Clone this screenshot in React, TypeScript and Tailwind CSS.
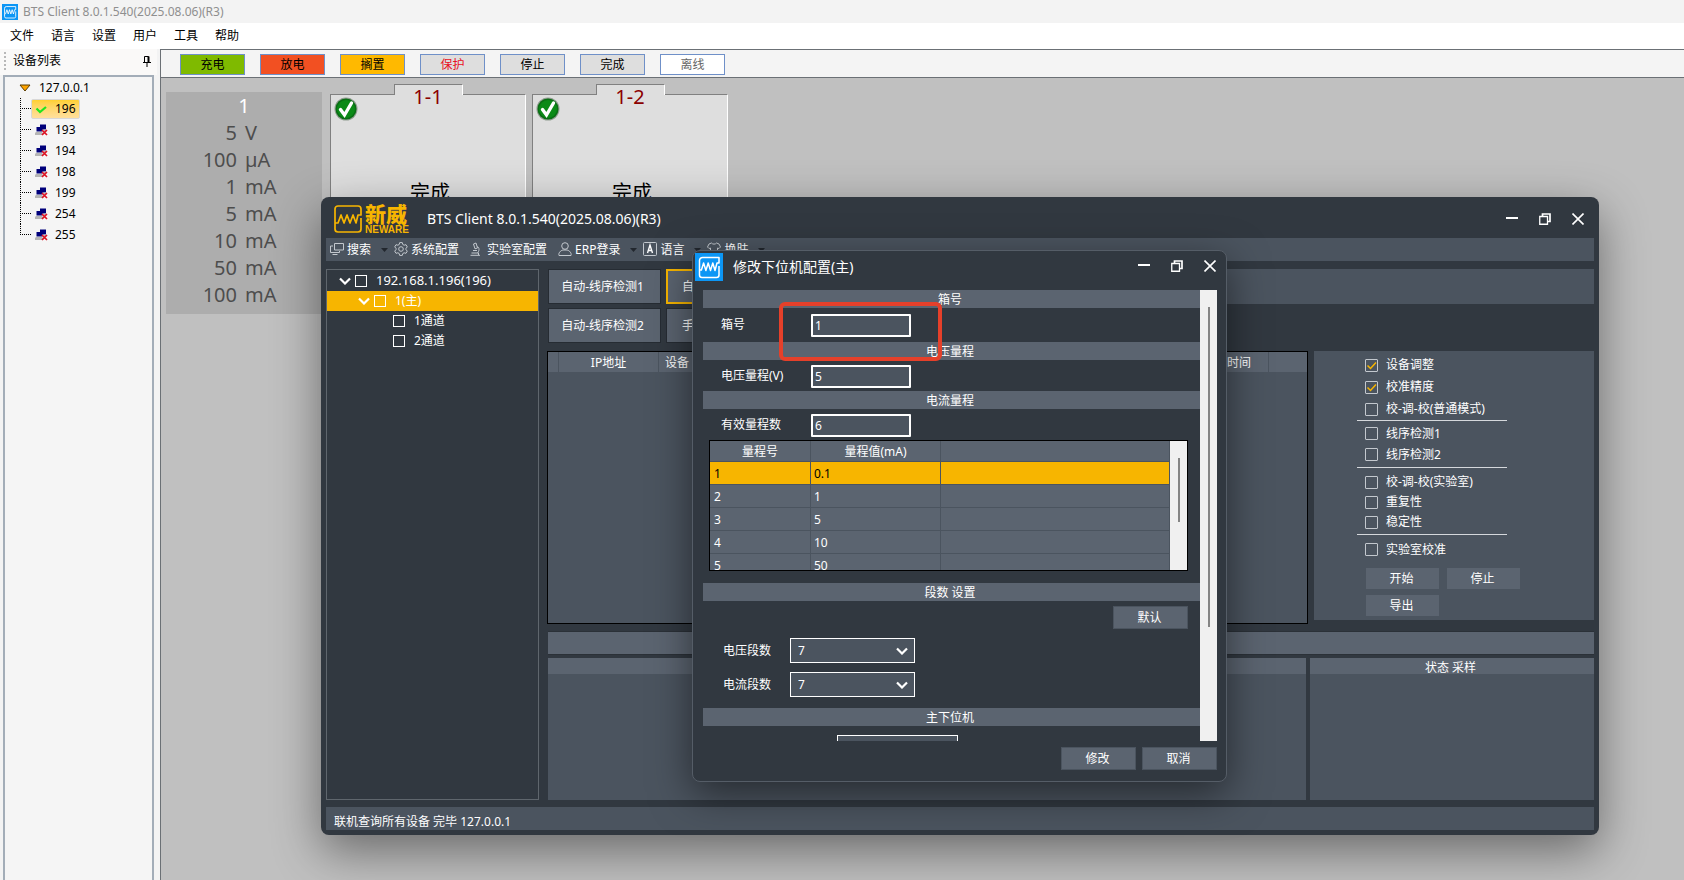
import { useState } from 'react';
import type { ReactNode } from 'react';
import clsx from 'clsx';

const APP_TITLE = 'BTS Client 8.0.1.540(2025.08.06)(R3)';

const menus = ['文件', '语言', '设置', '用户', '工具', '帮助'];

const devices = ['196', '193', '194', '198', '199', '254', '255'];

const legend = [
  { label: '充电', className: 'bg-[#7fba00] text-black' },
  { label: '放电', className: 'bg-[#f25022] text-black' },
  { label: '搁置', className: 'bg-[#ffb900] text-black' },
  { label: '保护', className: 'bg-[#dedede] text-[#e81123]' },
  { label: '停止', className: 'bg-[#dedede] text-black' },
  { label: '完成', className: 'bg-[#dedede] text-black' },
  { label: '离线', className: 'bg-white text-[#666666]' },
];

const ranges = [
  ['5', 'V'],
  ['100', 'µA'],
  ['1', 'mA'],
  ['5', 'mA'],
  ['10', 'mA'],
  ['50', 'mA'],
  ['100', 'mA'],
];

const currentRanges = ['0.1', '1', '5', '10', '50'];

const checkGroups = [
  {
    rowClass: 'h-[22px]',
    groupClass: 'mb-0.5 border-b',
    items: [
      { label: '设备调整', checked: true },
      { label: '校准精度', checked: true },
      { label: '校-调-校(普通模式)', checked: false },
    ],
  },
  {
    rowClass: 'h-[21px]',
    groupClass: 'mb-1 border-b pb-0.5',
    items: [
      { label: '线序检测1', checked: false },
      { label: '线序检测2', checked: false },
    ],
  },
  {
    rowClass: 'h-5',
    groupClass: 'mb-1 border-b pb-0.5',
    items: [
      { label: '校-调-校(实验室)', checked: false },
      { label: '重复性', checked: false },
      { label: '稳定性', checked: false },
    ],
  },
  {
    rowClass: 'h-[21px]',
    groupClass: '',
    items: [{ label: '实验室校准', checked: false }],
  },
];

function AppIcon({ className }: { className?: string }) {
  return (
    <svg viewBox="0 0 28 28" className={className} fill="none" aria-hidden="true">
      <rect width="28" height="28" fill="#0c96f5" />
      <path
        d="M4.500 17V7.500a3 3 0 0 1 3-3H24V10h-2l-2 7.500-2.200-7.500-2.300 7.500-2.300-7.500-2.300 7.500-2.300-7.500-2.200 7H4.500V22A2.500 2.500 0 0 0 7 24.500h14.500A2.500 2.500 0 0 0 24 22V13"
        stroke="white"
        strokeWidth="1.500"
        strokeLinejoin="round"
      />
    </svg>
  );
}

// Logo: marco con la onda + nombre de la marca
function Logo() {
  return (
    <div className="flex items-center gap-[3px] text-[#f7b500]">
      <svg viewBox="0 0 28 28" className="h-7 w-7" fill="none" stroke="currentColor" aria-hidden="true">
        <path
          d="M1 18V4a3 3 0 0 1 3-3h20a3 3 0 0 1 3 3v6h-3l-2 8-3-8-3 8-3-8-3 8-3-8-3 8H1v6a3 3 0 0 0 3 3h20a3 3 0 0 0 3-3V13"
          strokeWidth="1.700"
          strokeLinejoin="round"
        />
      </svg>
      <div className="flex flex-col">
        <span className="text-[21px] leading-[22px] font-black">新威</span>
        <span className="font-['Liberation_Sans',sans-serif] text-[10px] leading-[10px] font-bold">NEWARE</span>
      </div>
    </div>
  );
}

function OfflineIcon() {
  return (
    <svg viewBox="0 0 13 12" className="h-3 w-[13px]" aria-hidden="true">
      <rect x="5" y="0.500" width="6" height="5" fill="#00007b" />
      <rect x="1.500" y="3" width="6" height="4.500" fill="#00007b" />
      <path d="M1 8h6l1 1v2H0V9z" fill="#b5b5b5" />
      <path d="M9 5.500h2.500v1.500H9z" fill="#b5b5b5" />
      <path d="M7 6l5 5M12 6l-5 5" stroke="#dd1122" strokeWidth="1.700" />
    </svg>
  );
}

function CheckBadge() {
  return (
    <svg viewBox="0 0 24 24" className="h-6 w-6" aria-hidden="true">
      <circle cx="12" cy="12" r="11.500" fill="#8f9c8f" />
      <circle cx="12" cy="12" r="10.500" fill="#0a6e14" />
      <circle cx="12" cy="12" r="9" fill="#0b8a17" />
      <path d="M6.500 12.500l4 5.500L17.500 6" fill="none" stroke="white" strokeWidth="3.400" strokeLinecap="round" />
    </svg>
  );
}

function Chevron({ className }: { className?: string }) {
  return (
    <svg viewBox="0 0 12 8" className={clsx('h-2 w-3', className)} fill="none" aria-hidden="true">
      <path d="M1 1.500l5 5 5-5" stroke="white" strokeWidth="2.200" />
    </svg>
  );
}

function Caret() {
  return (
    <svg viewBox="0 0 7 4" className="ml-2.5 h-1 w-[7px]" aria-hidden="true">
      <path d="M0 0h7L3.500 4z" fill="#22272e" />
    </svg>
  );
}

function WindowControls() {
  return (
    <div className="flex">
      <button type="button" aria-label="最小化" className="flex h-6 w-[33px] items-center justify-center">
        <svg viewBox="0 0 12 12" className="h-3 w-3" fill="none">
          <path d="M0 5h12" stroke="white" strokeWidth="2" />
        </svg>
      </button>
      <button type="button" aria-label="还原" className="flex h-6 w-[33px] items-center justify-center">
        <svg viewBox="0 0 12 12" className="h-3 w-3" fill="none" stroke="white">
          <path d="M0.750 3.500h7.750v7.750H0.750z" strokeWidth="1.300" />
          <path d="M3.500 3V1h7.500v7.500H9" strokeWidth="1.700" />
        </svg>
      </button>
      <button type="button" aria-label="关闭" className="flex h-6 w-[33px] items-center justify-center">
        <svg viewBox="0 0 12 12" className="h-3 w-3" fill="none">
          <path d="M0.500 0.500l11 11M11.500 0.500l-11 11" stroke="white" strokeWidth="1.600" />
        </svg>
      </button>
    </div>
  );
}

function MenuItem({ label, caret, children }: { label: string; caret?: boolean; children: ReactNode }) {
  return (
    <button type="button" className={clsx('flex items-center', caret ? 'mr-1.5' : 'mr-[11px]')}>
      <svg
        viewBox="0 0 14 14"
        className="mr-[3px] mb-0.5 h-3.5 w-3.5"
        fill="none"
        stroke="#c3c8ce"
        strokeWidth="1"
        aria-hidden="true"
      >
        {children}
      </svg>
      {label}
      {caret && <Caret />}
    </button>
  );
}

function TreeCheck({ label }: { label: string }) {
  return (
    <input
      type="checkbox"
      aria-label={label}
      className="h-3 w-3 shrink-0 appearance-none border border-white checked:bg-white"
    />
  );
}

function CheckItem({ label, checked, className }: { label: string; checked: boolean; className: string }) {
  const [on, setOn] = useState(checked);
  return (
    <label className={clsx('flex items-center gap-2', className)}>
      <span className="relative flex">
        <input
          type="checkbox"
          checked={on}
          onChange={() => setOn(!on)}
          className="h-[13px] w-[13px] appearance-none rounded-[1px] border border-[#c3c8ce]"
        />
        {on && (
          <svg viewBox="0 0 13 13" className="pointer-events-none absolute inset-0 h-[13px] w-[13px]" fill="none">
            <path d="M2.500 6.500l3 3L11 3.500" stroke="#f7b500" strokeWidth="1.500" />
          </svg>
        )}
      </span>
      {label}
    </label>
  );
}

function DarkButton({ children }: { children: ReactNode }) {
  return (
    <button type="button" className="h-[23px] w-[75px] border border-[#4b545f] bg-[#5b6470] pr-0.5 text-xs leading-5">
      {children}
    </button>
  );
}

function SectionTitle({ children }: { children: ReactNode }) {
  return <h3 className="h-[18px] bg-[#5b6470] pr-[3px] text-center text-xs leading-5">{children}</h3>;
}

function Field({ label, id, value, className }: { label: string; id: string; value: string; className: string }) {
  return (
    <div className={clsx('flex items-center pl-[18px]', className)}>
      <label htmlFor={id} className="w-[90px]">
        {label}
      </label>
      <input
        id={id}
        defaultValue={value}
        className="h-[23px] w-[100px] rounded-[1px] border-2 border-white bg-[#4b545f] px-0.5 text-xs outline-none"
      />
    </div>
  );
}

function SegmentSelect({ label, id }: { label: string; id: string }) {
  return (
    <div className="flex items-center pl-5">
      <label htmlFor={id} className="w-[67px]">
        {label}
      </label>
      <div className="relative">
        <select
          id={id}
          defaultValue="7"
          className="h-[25px] w-[125px] appearance-none border border-white bg-[#4b545f] px-[7px] text-xs outline-none"
        >
          <option>7</option>
        </select>
        <Chevron className="pointer-events-none absolute top-[9px] right-[7px]" />
      </div>
    </div>
  );
}

function DeviceTree() {
  return (
    <aside className="flex w-40 shrink-0 flex-col bg-[#f3f3f3]">
      <div className="flex h-[26px] w-[157px] items-center bg-[#faf9f8] pr-1.5 pb-0.5 pl-1">
        <span className="h-[18px] border-l-2 border-dotted border-[#b8b8b8]"></span>
        <span className="ml-[7px] flex-1">设备列表</span>
        <svg viewBox="0 0 8 12" className="h-3 w-2" fill="none" stroke="black" aria-hidden="true">
          <path d="M1.500 7V1.500h4V7M0 7.500h8M4 8v4" />
          <path d="M5.500 1.500V7" strokeWidth="2" />
        </svg>
      </div>
      <div className="mx-[3px] mr-1.5 flex-1 border-2 border-b-0 border-[#a3adb8] bg-[#f5f5f5]">
        <div className="flex h-[21px] items-center gap-2 pl-3.5">
          <svg viewBox="0 0 12 8" className="h-2 w-3" aria-hidden="true">
            <path d="M1 1h10L6 7z" fill="#ffa500" stroke="#5a3c00" />
          </svg>
          127.0.0.1
        </div>
        <ul>
          {devices.map((d, i) => (
            <li key={d} className="flex h-[21px] items-center pl-[15px]">
              <svg viewBox="0 0 11 21" className="h-[21px] w-[11px]" stroke="black" strokeDasharray="1 1" aria-hidden="true">
                <path d={i === devices.length - 1 ? 'M0.500 0v10' : 'M0.500 0v21'} />
                <path d="M0 10.500h11" />
              </svg>
              <span
                className={clsx(
                  'flex h-5 items-center gap-[7px] border px-[3px]',
                  i === 0
                    ? 'rounded-[2px] border-[#d8d8d8] bg-linear-to-b from-[#ffd02e] to-[#ffdf9c]'
                    : 'border-transparent',
                )}
              >
                {i === 0 ? (
                  <svg viewBox="0 0 13 12" className="h-3 w-[13px]" fill="none" aria-hidden="true">
                    <path d="M1.500 5.500l3.500 3.500L11 4" stroke="#1ee61e" strokeWidth="2.200" />
                  </svg>
                ) : (
                  <OfflineIcon />
                )}
                {d}
              </span>
            </li>
          ))}
        </ul>
      </div>
    </aside>
  );
}

function ChannelCard({ name }: { name: string }) {
  return (
    <div className="flex w-[196px] flex-col">
      <div className="z-10 -mb-px h-[11px] w-[69px] self-center border-t border-r border-l border-t-[#808080] border-r-white border-l-[#808080] bg-[#dedede] text-center text-xl leading-6 text-[#8b0000]">
        {name}
      </div>
      <div className="flex h-28 flex-col border-t border-r border-l border-t-[#808080] border-r-white border-l-[#808080] bg-[#dedede] pt-0.5">
        <div className="pl-[3px]">
          <CheckBadge />
        </div>
        <p className="mt-[58px] pl-1 text-center text-xl leading-7">完成</p>
      </div>
    </div>
  );
}

function ConfigDialog() {
  return (
    <section
      aria-label="修改下位机配置"
      className="absolute top-[250px] left-[692px] w-[535px] rounded-lg border border-[#555d67] bg-[#313840] text-xs text-white shadow-[0_12px_40px_rgba(0,0,0,0.5)]"
    >
      <header className="flex h-[39px] items-start pt-0.5 pl-0.5">
        <AppIcon className="h-7 w-7" />
        <h2 className="ml-2.5 flex-1 text-sm leading-7">修改下位机配置(主)</h2>
        <div className="pt-px">
          <WindowControls />
        </div>
      </header>

      <div className="relative mr-[9px] ml-2.5 flex h-[451px] overflow-hidden">
        <div className="flex-1">
          <SectionTitle>箱号</SectionTitle>
          <Field label="箱号" id="box-no" value="1" className="h-[34px]" />
          <SectionTitle>电压量程</SectionTitle>
          <Field label="电压量程(V)" id="voltage-range" value="5" className="h-[31px] pt-px" />
          <SectionTitle>电流量程</SectionTitle>
          <Field label="有效量程数" id="range-count" value="6" className="h-[31px] pt-px" />

          <div className="mr-3 mb-3 ml-1.5 flex h-[131px] overflow-hidden border border-black">
            <div className="flex-1">
              <table className="w-full table-fixed border-separate border-spacing-0">
                <thead>
                  <tr className="h-[21px] bg-[#5b6470]">
                    <th className="w-[101px] border-r border-b border-[#4b545f] pt-0.5 font-normal">量程号</th>
                    <th className="w-[130px] border-r border-b border-[#4b545f] pt-0.5 font-normal">量程值(mA)</th>
                    <th className="border-r border-b border-[#4b545f]"></th>
                  </tr>
                </thead>
                <tbody>
                  {currentRanges.map((value, i) => (
                    <tr key={value} className={clsx('h-[23px]', i === 0 ? 'bg-[#f7b500] text-black' : 'bg-[#5b6470]')}>
                      <td className="border-r border-b border-[#4b545f] pt-0.5 pl-1">{i + 1}</td>
                      <td className="border-r border-b border-[#4b545f] pt-0.5 pl-[3px]">{value}</td>
                      <td className="border-r border-b border-[#4b545f]"></td>
                    </tr>
                  ))}
                </tbody>
              </table>
            </div>
            <div className="w-[17px] bg-[#f0f0f0] pt-[17px]">
              <div className="mx-auto h-16 w-0.5 bg-[#858585]"></div>
            </div>
          </div>

          <SectionTitle>段数 设置</SectionTitle>
          <div className="flex justify-end pt-[5px] pr-3">
            <DarkButton>默认</DarkButton>
          </div>
          <div className="mt-[9px] mb-[11px] flex flex-col gap-[9px]">
            <SegmentSelect label="电压段数" id="voltage-seg" />
            <SegmentSelect label="电流段数" id="current-seg" />
          </div>
          <SectionTitle>主下位机</SectionTitle>
          <input aria-label="主下位机" className="mt-[9px] ml-[134px] h-[25px] w-[121px] border border-white bg-[#4b545f]" />
        </div>
        <div className="w-[17px] bg-[#f0f0f0] pt-[17px]">
          <div className="mx-auto h-80 w-0.5 bg-[#858585]"></div>
        </div>

        {/* marca roja sobre el campo 箱号 */}
        <div className="pointer-events-none absolute top-3 left-[76px] h-[59px] w-[163px] rounded-md border-4 border-[#e5402a]"></div>
      </div>

      <footer className="flex justify-end gap-1.5 pt-1.5 pr-[9px] pb-[11px]">
        <DarkButton>修改</DarkButton>
        <DarkButton>取消</DarkButton>
      </footer>
    </section>
  );
}

function ClientWindow() {
  return (
    <section
      aria-label={APP_TITLE}
      className="absolute top-[197px] right-[85px] bottom-[45px] left-[321px] flex flex-col rounded-lg bg-[#313840] px-[5px] pb-[5px] text-xs text-white shadow-[0_16px_48px_rgba(0,0,0,0.45)]"
    >
      <header className="flex h-[41px] shrink-0 items-center pt-0.5 pl-2">
        <Logo />
        <h1 className="ml-[18px] flex-1 pt-px text-sm">{APP_TITLE}</h1>
        <WindowControls />
      </header>

      <nav className="flex h-[23px] shrink-0 items-center bg-[#4b545f] pl-1">
        <MenuItem label="搜索" caret>
          <path d="M4.500 1.500h9v6.500h-9zM3 4H0.500v6.500h9V9M2.500 12.500h5" />
        </MenuItem>
        <MenuItem label="系统配置">
          <path d="M5.700 0.600h2.600l0.500 1.900 1.300 0.700 1.900-0.500 1.300 2.200L12 6.300v1.400l1.300 1.400-1.300 2.200-1.900-0.500-1.300 0.700-0.500 1.900H5.700l-0.500-1.900-1.300-0.700-1.900 0.500L0.700 9.100 2 7.700V6.300L0.700 4.900 2 2.700l1.900 0.500 1.300-0.700z" />
          <circle cx="7" cy="7" r="2.300" />
        </MenuItem>
        <MenuItem label="实验室配置">
          <path d="M3.500 2l2.500-1 1.500 5-2.500 0.800zM3 8.500h4M7.500 4.500c2 1 2 4.500 0 6.500M0.500 13.300h9.500M1.500 11h7v2" />
        </MenuItem>
        <MenuItem label="ERP登录" caret>
          <circle cx="7" cy="4" r="3.300" />
          <path d="M1 13.500c-0.800-2.500 1.500-5 4-5.500h4c2.500 0.500 4.800 3 4 5.500z" />
        </MenuItem>
        <MenuItem label="语言" caret>
          <rect x="0.500" y="0.500" width="13" height="13" rx="1" />
          <path d="M4.500 11l2.500-8 2.500 8M5.300 8.500h3.400" strokeWidth="1.400" stroke="white" />
        </MenuItem>
        <MenuItem label="换肤" caret>
          <path d="M4.500 1c1 1.500 4 1.500 5 0L12 2l1.500 3-1.500 1.500-1.500-0.500v7.500h-7V6L2 6.500 0.500 5 2 2z" />
        </MenuItem>
      </nav>

      <div className="mt-2 mb-[7px] flex min-h-0 flex-1 gap-2">
        <ul className="w-[213px] shrink-0 border border-[#5f666d] pt-px">
          <li className="flex h-5 items-center pl-3 text-[13px]">
            <Chevron className="mr-1" />
            <TreeCheck label="192.168.1.196(196)" />
            <span className="ml-[9px]">192.168.1.196(196)</span>
          </li>
          <li className="flex h-5 items-center bg-[#f7b500] pl-[31px]">
            <Chevron className="mr-1" />
            <TreeCheck label="1(主)" />
            <span className="ml-[9px]">1(主)</span>
          </li>
          <li className="flex h-5 items-center pl-[66px]">
            <TreeCheck label="1通道" />
            <span className="ml-[9px]">1通道</span>
          </li>
          <li className="flex h-5 items-center pl-[66px]">
            <TreeCheck label="2通道" />
            <span className="ml-[9px]">2通道</span>
          </li>
        </ul>

        <div className="flex min-w-0 flex-1 flex-col">
          <div className="flex h-[35px] shrink-0 gap-[5px] pl-px">
            <button type="button" className="w-[113px] border border-[#262c33] bg-[#5b6470] pr-1">
              自动-线序检测1
            </button>
            <button type="button" className="w-[113px] border-2 border-[#f7b500] bg-[#5b6470] pl-3.5 text-left">
              自
            </button>
            <div className="flex-1 bg-[#4b545f]"></div>
          </div>
          <div className="mt-1 flex h-[35px] shrink-0 gap-[5px] pl-px">
            <button type="button" className="w-[113px] border border-[#262c33] bg-[#5b6470] pr-1">
              自动-线序检测2
            </button>
            <button type="button" className="w-[113px] border border-[#262c33] bg-[#5b6470] pl-[15px] text-left">
              手
            </button>
          </div>

          <div className="mt-2 flex shrink-0 items-start gap-1.5">
            <div className="h-[273px] min-w-0 flex-1 border border-black bg-[#4b545f]">
              <table className="w-full table-fixed border-separate border-spacing-0">
                <thead>
                  <tr className="h-5 bg-[#5b6470]">
                    <th className="w-[11px] border-r border-[#4b545f]"></th>
                    <th className="w-[100px] border-r border-[#4b545f] pt-0.5 font-normal">IP地址</th>
                    <th className="border-r border-[#4b545f] pt-0.5 pl-1.5 text-left font-normal">设备</th>
                    <th className="border-r border-[#4b545f] pt-0.5 pr-[17px] text-right font-normal">时间</th>
                    <th className="w-[38px]"></th>
                  </tr>
                </thead>
              </table>
            </div>

            <div className="w-[280px] bg-[#4b545f] pt-[3px] pb-[3px]">
              {checkGroups.map((group, i) => (
                <div key={i} className={clsx('ml-[43px] w-[150px] border-[#d5d8dc] pl-2', group.groupClass)}>
                  {group.items.map((item) => (
                    <CheckItem key={item.label} label={item.label} checked={item.checked} className={group.rowClass} />
                  ))}
                </div>
              ))}
              <div className="mt-[7px] ml-[51px] flex flex-wrap gap-x-1.5 gap-y-1">
                <DarkButton>开始</DarkButton>
                <DarkButton>停止</DarkButton>
                <DarkButton>导出</DarkButton>
              </div>
            </div>
          </div>

          <div className="mt-[7px] ml-px h-6 shrink-0 border-y border-[#2b3138] bg-[#5b6470]"></div>

          <div className="mt-[3px] ml-px flex min-h-0 flex-1 gap-1">
            <div className="flex-1 bg-[#4b545f]">
              <div className="h-4 bg-[#5b6470]"></div>
            </div>
            <div className="w-[284px] bg-[#4b545f]">
              <h3 className="h-4 bg-[#5b6470] pr-[3px] text-center leading-5">状态 采样</h3>
            </div>
          </div>
        </div>
      </div>

      <footer className="h-[23px] shrink-0 bg-[#4b545f] pt-[3px] pl-2 leading-6">联机查询所有设备 完毕 127.0.0.1</footer>
    </section>
  );
}

export default function App() {
  return (
    <div className="relative flex h-screen flex-col overflow-hidden bg-[#c0c0c0] font-['Noto_Sans','Noto_Sans_CJK_SC',sans-serif] text-xs text-black">
      <header className="flex h-[23px] shrink-0 items-center gap-[5px] bg-[#f3f3f3] pl-0.5 text-[#8f8f8f]">
        <AppIcon className="h-4 w-4" />
        {APP_TITLE}
      </header>
      <nav className="flex h-[26px] shrink-0 items-center gap-[17px] bg-white pl-2.5">
        {menus.map((m) => (
          <button key={m} type="button">
            {m}
          </button>
        ))}
      </nav>

      <div className="flex min-h-0 flex-1">
        <DeviceTree />

        <main className="min-w-0 flex-1 border-l border-[#6b7075]">
          <div className="flex h-[29px] items-center gap-[15px] border-y border-[#6b7075] bg-[#f4f4f4] pt-0.5 pl-[19px]">
            {legend.map((item) => (
              <button
                key={item.label}
                type="button"
                className={clsx('h-[21px] w-[65px] border border-[#6f90c8] leading-[19px]', item.className)}
              >
                {item.label}
              </button>
            ))}
          </div>

          <div className="flex items-start gap-1.5 pt-1.5 pl-[5px]">
            <div className="mt-2 mr-0.5 w-[156px] bg-[#adadad] pb-1.5 text-xl leading-[27px] text-[#4d4d4d]">
              <p className="text-center text-white">1</p>
              {ranges.map(([value, unit], i) => (
                <p key={i} className="flex gap-2">
                  <span className="w-[71px] text-right">{value}</span>
                  <span>{unit}</span>
                </p>
              ))}
            </div>
            <ChannelCard name="1-1" />
            <ChannelCard name="1-2" />
          </div>
        </main>
      </div>

      <ClientWindow />
      <ConfigDialog />
    </div>
  );
}
